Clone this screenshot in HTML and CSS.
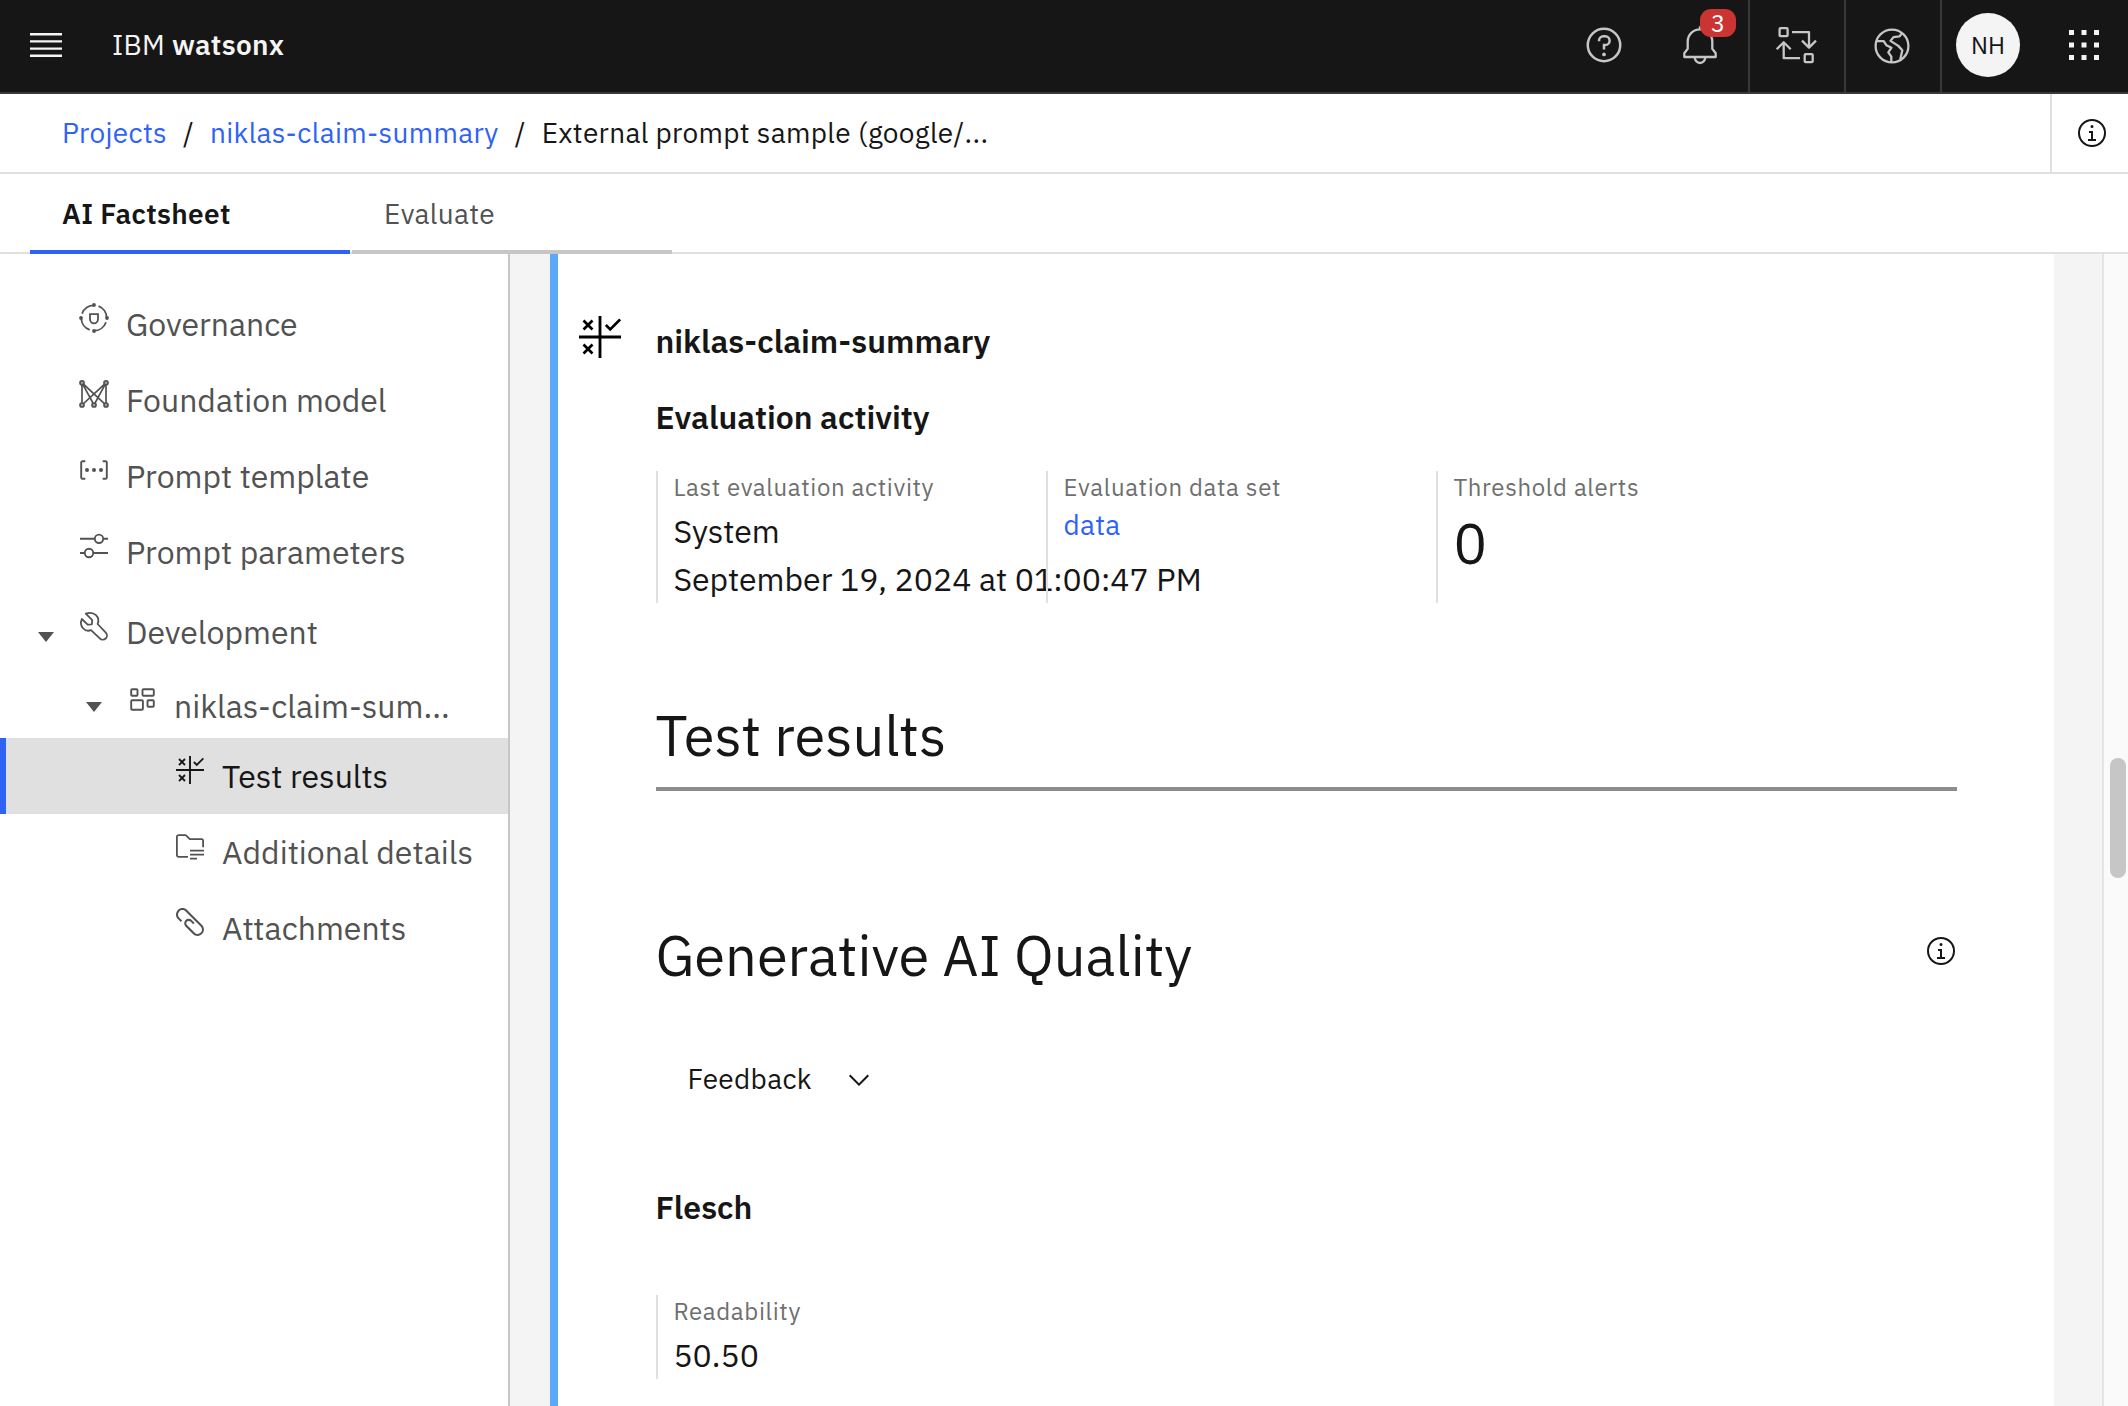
FILE: index.html
```html
<!DOCTYPE html>
<html lang="en">
<head>
<meta charset="utf-8">
<title>IBM watsonx - AI Factsheet</title>
<link rel="stylesheet" href="styles.css">
</head>
<body>
<svg class="sprite" aria-hidden="true">
  <symbol id="info" viewBox="0 0 32 32"><circle cx="16" cy="16" r="13" fill="none" stroke="currentColor" stroke-width="2"/><path d="M17 22v-8h-4v2h2v6h-3v2h8v-2zM16 8a1.5 1.5 0 1 0 1.5 1.5A1.5 1.5 0 0 0 16 8z"/></symbol>
  <symbol id="results" viewBox="0 0 28 28"><g fill="none" stroke="currentColor"><path stroke-width="1.9" d="M14 0v28M0 14h28"/><path stroke-width="1.8" d="M3 3l6 6M9 3l-6 6M3 19l6 6M9 19l-6 6M17.9 6l2.9 2.9 6.6-6.6"/></g></symbol>
</svg>

<header class="header">
  <button class="menu" aria-label="Menu"><svg width="40" height="40" viewBox="0 0 20 20"><path d="M2 14.8h16V16H2zM2 11.2h16v1.2H2zM2 7.6h16v1.2H2zM2 4h16v1.2H2z"/></svg></button>
  <div class="brand">IBM <b>watsonx</b></div>
  <div class="actions">
    <div class="action"><svg width="40" height="40" viewBox="0 0 32 32"><circle cx="16" cy="16" r="13" fill="none" stroke="currentColor" stroke-width="2"/><circle cx="16" cy="23.5" r="1.5"/><path d="M17 8h-1.5A4.49 4.49 0 0 0 11 12.500v.5h2v-.5A2.500 2.500 0 0 1 15.500 10H17a2.500 2.500 0 0 1 0 5h-2v4.500h2V17a4.500 4.500 0 0 0 0-9z"/></svg></div>
    <div class="action action--alerts"><svg class="outline" width="40" height="40" viewBox="0 0 40 40"><path d="M20 1.300v3.500M4.300 32h31.400v-3.700l-3.400-4.500v-7.200a12.300 12.300 0 0 0-24.600 0v7.200l-3.400 4.500zM14.700 32a5.300 6 0 0 0 10.600 0"/></svg><span class="badge">3</span></div>
    <div class="action action--ruled"><svg class="outline" width="40" height="40" viewBox="0 0 40 40"><rect x="3.600" y="3.200" width="8" height="8" rx="1"/><rect x="28.700" y="29.200" width="8" height="8" rx="1"/><path d="M16 7.200h17v15.600M26 15.600l7 7 7-7M24 33.200H7.700V17.200M.7 24.200l7-7 7 7"/></svg></div>
    <div class="action action--ruled"><svg class="outline" width="40" height="40" viewBox="0 0 40 40"><circle cx="20" cy="21" r="16.400"/><path d="M4.500 16.200h7.200l2.600 4 5.200 2.500-3.200 4.600 3 4.300v5.400M30 8.200L27.500 11.400l-6 .7-3 3.800 7.800 5 4 4.300-2.100 9.600"/></svg></div>
    <div class="action action--ruled"><span class="avatar">NH</span></div>
    <div class="action action--apps"><svg width="30" height="30" viewBox="0 0 30 30"><path d="M0 0h5v5H0zM12.500 0h5v5h-5zM25 0h5v5h-5zM0 12.500h5v5H0zM12.500 12.500h5v5h-5zM25 12.500h5v5h-5zM0 25h5v5H0zM12.500 25h5v5h-5zM25 25h5v5h-5z"/></svg></div>
  </div>
</header>

<nav class="breadcrumb">
  <div class="crumbs"><a>Projects</a><span>/</span><a>niklas-claim-summary</a><span>/</span><span>External prompt sample (google/...</span></div>
  <div class="breadcrumb__info"><svg width="32" height="32"><use href="#info"/></svg></div>
</nav>

<div class="tabs">
  <div class="tab tab--active">AI Factsheet</div>
  <div class="tab">Evaluate</div>
</div>

<div class="body">
  <aside class="tree">
    <div class="node"><svg class="icon" viewBox="0 0 28 28"><g fill="none" stroke="currentColor" stroke-width="1.800"><circle cx="14" cy="14" r="12.700" stroke-dasharray="15.700 4.250" stroke-dashoffset="15.700"/><path d="M10 10.100h8v4.900a4 4.300 0 0 1-8 0z"/></g><circle cx="14" cy="1" r="1.900"/><circle cx="27" cy="14" r="1.900"/><circle cx="14" cy="27" r="1.900"/><circle cx="1" cy="14" r="1.900"/></svg>Governance</div>
    <div class="node"><svg class="icon" viewBox="0 0 28 28"><g stroke="currentColor" stroke-width="1.700"><path fill="none" d="M2 25V2.800l24 22.200V2.800L2 25M2 2.800L14 25 26 2.800"/><g fill="#a8a8a8"><circle cx="2" cy="2.800" r="2"/><circle cx="26" cy="2.800" r="2"/><circle cx="2" cy="25" r="2"/><circle cx="14" cy="25" r="2"/><circle cx="26" cy="25" r="2"/></g></g></svg>Foundation model</div>
    <div class="node"><svg class="icon" viewBox="0 0 28 28"><path fill="none" stroke="currentColor" stroke-width="1.900" d="M5.300 5.200H2.500a1.300 1.300 0 0 0-1.300 1.300v15a1.300 1.300 0 0 0 1.300 1.300h2.800M22.700 5.200h2.800a1.300 1.300 0 0 1 1.300 1.300v15a1.300 1.300 0 0 1-1.300 1.300h-2.800"/><circle cx="7" cy="14" r="2"/><circle cx="14" cy="14" r="2"/><circle cx="21" cy="14" r="2"/></svg>Prompt template</div>
    <div class="node"><svg class="icon" viewBox="0 0 28 28"><g fill="none" stroke="currentColor" stroke-width="1.900"><path d="M0 6.800h14.800M23.200 6.800H28M0 21h4.800M13.200 21H28"/><circle cx="19" cy="6.800" r="4.200"/><circle cx="9" cy="21" r="4.200"/></g></svg>Prompt parameters</div>
    <div class="node node--dev"><span class="caret"></span><svg class="icon" viewBox="0 0 28 28"><path fill="none" stroke="currentColor" stroke-width="1.800" stroke-linejoin="round" d="M5.800 1.700l6.400 6.500-.3 4.100-4.200.4L1.800 7C.3 10.500.9 14 3.300 16.500 5.400 18.700 8.300 19.200 11 18.200l8.800 8.200a4.150 4.150 0 0 0 6-5.800L17.600 12c1.300-3 .8-6.400-1.600-8.800C13.200.6 9.300.3 5.800 1.700z"/></svg>Development</div>
    <div class="node node--sub"><span class="caret"></span><svg class="icon" viewBox="0 0 28 28"><g fill="none" stroke="currentColor" stroke-width="1.900"><rect x="3.200" y="3.200" width="6.300" height="6.600" rx="1"/><rect x="14.500" y="3.200" width="11.300" height="6.600" rx="1"/><rect x="3.200" y="14.200" width="11.700" height="9.600" rx="1"/><rect x="19.500" y="14.200" width="6.300" height="6.600" rx="1"/></g></svg>niklas-claim-sum...</div>
    <div class="node node--leaf node--selected"><svg class="icon"><use href="#results"/></svg>Test results</div>
    <div class="node node--leaf"><svg class="icon" viewBox="0 0 28 28"><path fill="none" stroke="currentColor" stroke-width="1.800" d="M12 24.800H2.600a1.700 1.700 0 0 1-1.700-1.700V4.900a1.700 1.700 0 0 1 1.700-1.700h6.600a2 2 0 0 1 1.400.6l3.200 3.300h11.800a1.500 1.500 0 0 1 1.500 1.500v6.700M14 18.700h14M14 22.700h14M14 26.700h7"/></svg>Additional details</div>
    <div class="node node--leaf"><svg class="icon" viewBox="2 2 28 28"><path d="M28.100 18.900l-15-15C10.600 1.400 6.500 1.400 4 3.800l-.1.100C1.400 6.400 1.400 10.500 3.800 13l.1.100L6.800 16l1.400-1.400-2.900-2.900c-1.700-1.700-1.700-4.600 0-6.300 1.700-1.800 4.500-1.800 6.200-.1l.1.100 15.100 15c1.700 1.700 1.800 4.500.1 6.200-1.700 1.700-4.500 1.800-6.200.1l-.1-.1-7.500-7.500c-1-1-.9-2.600 0-3.500 1-.9 2.500-.9 3.500 0l2.700 2.700 1.400-1.400-2.800-2.800c-1.800-1.700-4.600-1.700-6.400.2-1.600 1.700-1.600 4.500 0 6.200l7.500 7.500c2.500 2.500 6.600 2.500 9.100 0 2.600-2.500 2.600-6.600.1-9.100z"/></svg>Attachments</div>
  </aside>

  <main class="sheet">
    <div class="sheet__title"><svg class="sheet__icon" width="42" height="42"><use href="#results"/></svg><h2>niklas-claim-summary</h2></div>
    <h2>Evaluation activity</h2>
    <div class="facts">
      <div class="fact"><div class="fact__label">Last evaluation activity</div><div class="fact__value">System</div><div class="fact__value">September 19, 2024 at 01:00:47 PM</div></div>
      <div class="fact"><div class="fact__label">Evaluation data set</div><a class="fact__link">data</a></div>
      <div class="fact"><div class="fact__label">Threshold alerts</div><div class="fact__count">0</div></div>
    </div>
    <h1 class="section">Test results</h1>
    <div class="quality"><h1>Generative AI Quality</h1><svg width="32" height="32"><use href="#info"/></svg></div>
    <div class="picker">Feedback<svg width="32" height="32" viewBox="0 0 32 32"><path d="M16 22L6 12l1.400-1.400 8.600 8.600 8.600-8.600L26 12z"/></svg></div>
    <h2>Flesch</h2>
    <div class="fact metric"><div class="fact__label">Readability</div><div class="fact__value">50.50</div></div>
  </main>

  <div class="scroll"><div class="scroll__thumb"></div></div>
</div>
</body>
</html>
```
FILE: styles.css
```css
* { box-sizing: border-box; }

body {
  margin: 0;
  width: 2128px;
  height: 1406px;
  overflow: hidden;
  display: flex;
  flex-direction: column;
  background: #fff;
  color: #161616;
  font-family: "IBM Plex Sans", Roboto, sans-serif;
  font-size: 28px;
  letter-spacing: 0.32px;
  white-space: nowrap;
}

svg { display: block; flex: none; fill: currentColor; overflow: visible; }
.outline { fill: none; stroke: currentColor; stroke-width: 2.3px; stroke-linejoin: round; }
.sprite { position: absolute; width: 0; height: 0; }
a { color: #2f62f5; }
h1, h2 { margin: 0; letter-spacing: 0; text-indent: -0.6px; }
h1 { font-size: 56px; font-weight: 400; line-height: 64px; }
h2 { font-size: 32px; font-weight: 600; line-height: 40px; }

/* Top bar */
.header {
  flex: none;
  height: 94px;
  display: flex;
  border-bottom: 2px solid #393939;
  background: #161616;
  color: #f4f4f4;
}
.menu {
  width: 66px;
  height: 90px;
  padding: 0 0 0 26px;
  border: 0;
  background: none;
  color: #f4f4f4;
}
.brand { margin-left: 46px; line-height: 89px; }
.brand b { font-weight: 600; }
.actions { display: flex; margin-left: auto; width: 572px; }
.action {
  flex: none;
  width: 96px;
  display: flex;
  justify-content: center;
  align-items: center;
  padding-bottom: 2px;
  color: #c6c6c6;
}
.action--ruled { border-left: 2px solid #393939; padding-right: 2px; }
.action--alerts { position: relative; }
.action--apps { color: #f4f4f4; }
.badge {
  position: absolute;
  left: 48px;
  top: 9px;
  width: 36px;
  height: 28px;
  border-radius: 11px;
  background: #ca3433;
  color: #fff;
  font-size: 24px;
  line-height: 29px;
  text-align: center;
}
.avatar {
  width: 64px;
  height: 64px;
  border-radius: 50%;
  background: #f4f4f4;
  color: #161616;
  font-size: 24px;
  line-height: 64px;
  letter-spacing: 0;
  text-align: center;
}

/* Breadcrumb */
.breadcrumb {
  flex: none;
  height: 80px;
  display: flex;
  justify-content: space-between;
  border-bottom: 2px solid #e0e0e0;
}
.crumbs { display: flex; gap: 16px; padding-left: 62px; line-height: 78px; }
.breadcrumb__info {
  width: 78px;
  display: flex;
  align-items: center;
  padding-left: 24px;
  border-left: 2px solid #e0e0e0;
}

/* Tabs */
.tabs {
  flex: none;
  height: 80px;
  display: flex;
  gap: 2px;
  padding-left: 30px;
  border-bottom: 2px solid #e0e0e0;
}
.tab {
  width: 320px;
  height: 80px;
  padding-left: 32px;
  border-bottom: 4px solid #c6c6c6;
  line-height: 80px;
  color: #525252;
}
.tab--active { border-color: #2f62f5; color: #161616; font-weight: 600; }

/* Body */
.body { flex: 1; display: flex; min-height: 0; background: #f4f4f4; }

/* Navigation tree */
.tree {
  width: 510px;
  padding-top: 32px;
  border-right: 2px solid #c6c6c6;
  background: #fff;
  color: #525252;
  font-size: 32px;
  letter-spacing: 0;
}
.node {
  height: 76px;
  display: flex;
  align-items: flex-start;
  gap: 18px;
  padding-left: 80px;
  line-height: 76px;
}
.icon { width: 28px; height: 28px; margin-top: 18px; }
.caret {
  width: 0;
  border: 8px solid transparent;
  border-top: 10px solid currentColor;
  border-bottom: 0;
  margin-right: 8px;
}
.node--dev { height: 78px; padding: 4px 0 0 38px; }
.node--dev .caret { margin-top: 38px; }
.node--sub { height: 70px; padding-left: 86px; }
.node--sub .caret { margin-top: 34px; }
.node--leaf { padding-left: 176px; }
.node--selected {
  padding-left: 170px;
  border-left: 6px solid #2f62f5;
  background: #e0e0e0;
  color: #161616;
}

/* Factsheet */
.sheet {
  width: 1504px;
  margin-left: 40px;
  padding: 62px 97px 0 98px;
  border-left: 8px solid #5baaf8;
  background: #fff;
}
.sheet__title { display: flex; margin-left: -77px; gap: 35px; padding-top: 5px; margin-bottom: 37px; }
.sheet__icon { margin-top: -5px; color: #000; }
.sheet__title h2 { margin-bottom: -1px; }
.facts { display: flex; margin-top: 34px; height: 132px; }
.fact { width: 390px; padding-left: 15.4px; border-left: 2px solid #e0e0e0; }
.fact__label {
  margin-bottom: 4px;
  color: #6f6f6f;
  font-size: 24px;
  line-height: 32px;
  letter-spacing: 0.64px;
}
.fact__value { font-size: 32px; line-height: 48px; letter-spacing: 0; }
.fact__link { display: block; line-height: 36px; }
.fact__count { margin-top: 8px; font-size: 56px; line-height: 64px; letter-spacing: 0; }
.section { margin-top: 100px; padding-bottom: 20px; border-bottom: 4px solid #8d8d8d; }
.quality { display: flex; justify-content: space-between; margin-top: 132px; }
.quality svg { margin-top: 12px; }
.picker { display: flex; gap: 31px; margin: 74px 0 90px 31.4px; line-height: 36px; }
.picker svg { margin-top: 3px; }
.metric { height: 84px; margin-top: 68px; }

/* Scrollbar */
.scroll {
  width: 26px;
  margin-left: auto;
  padding: 504px 0 0 6px;
  border-left: 2px solid #e4e4e4;
  background: #fafafa;
}
.scroll__thumb { width: 16px; height: 120px; border-radius: 8px; background: #c6c6c6; }
```
